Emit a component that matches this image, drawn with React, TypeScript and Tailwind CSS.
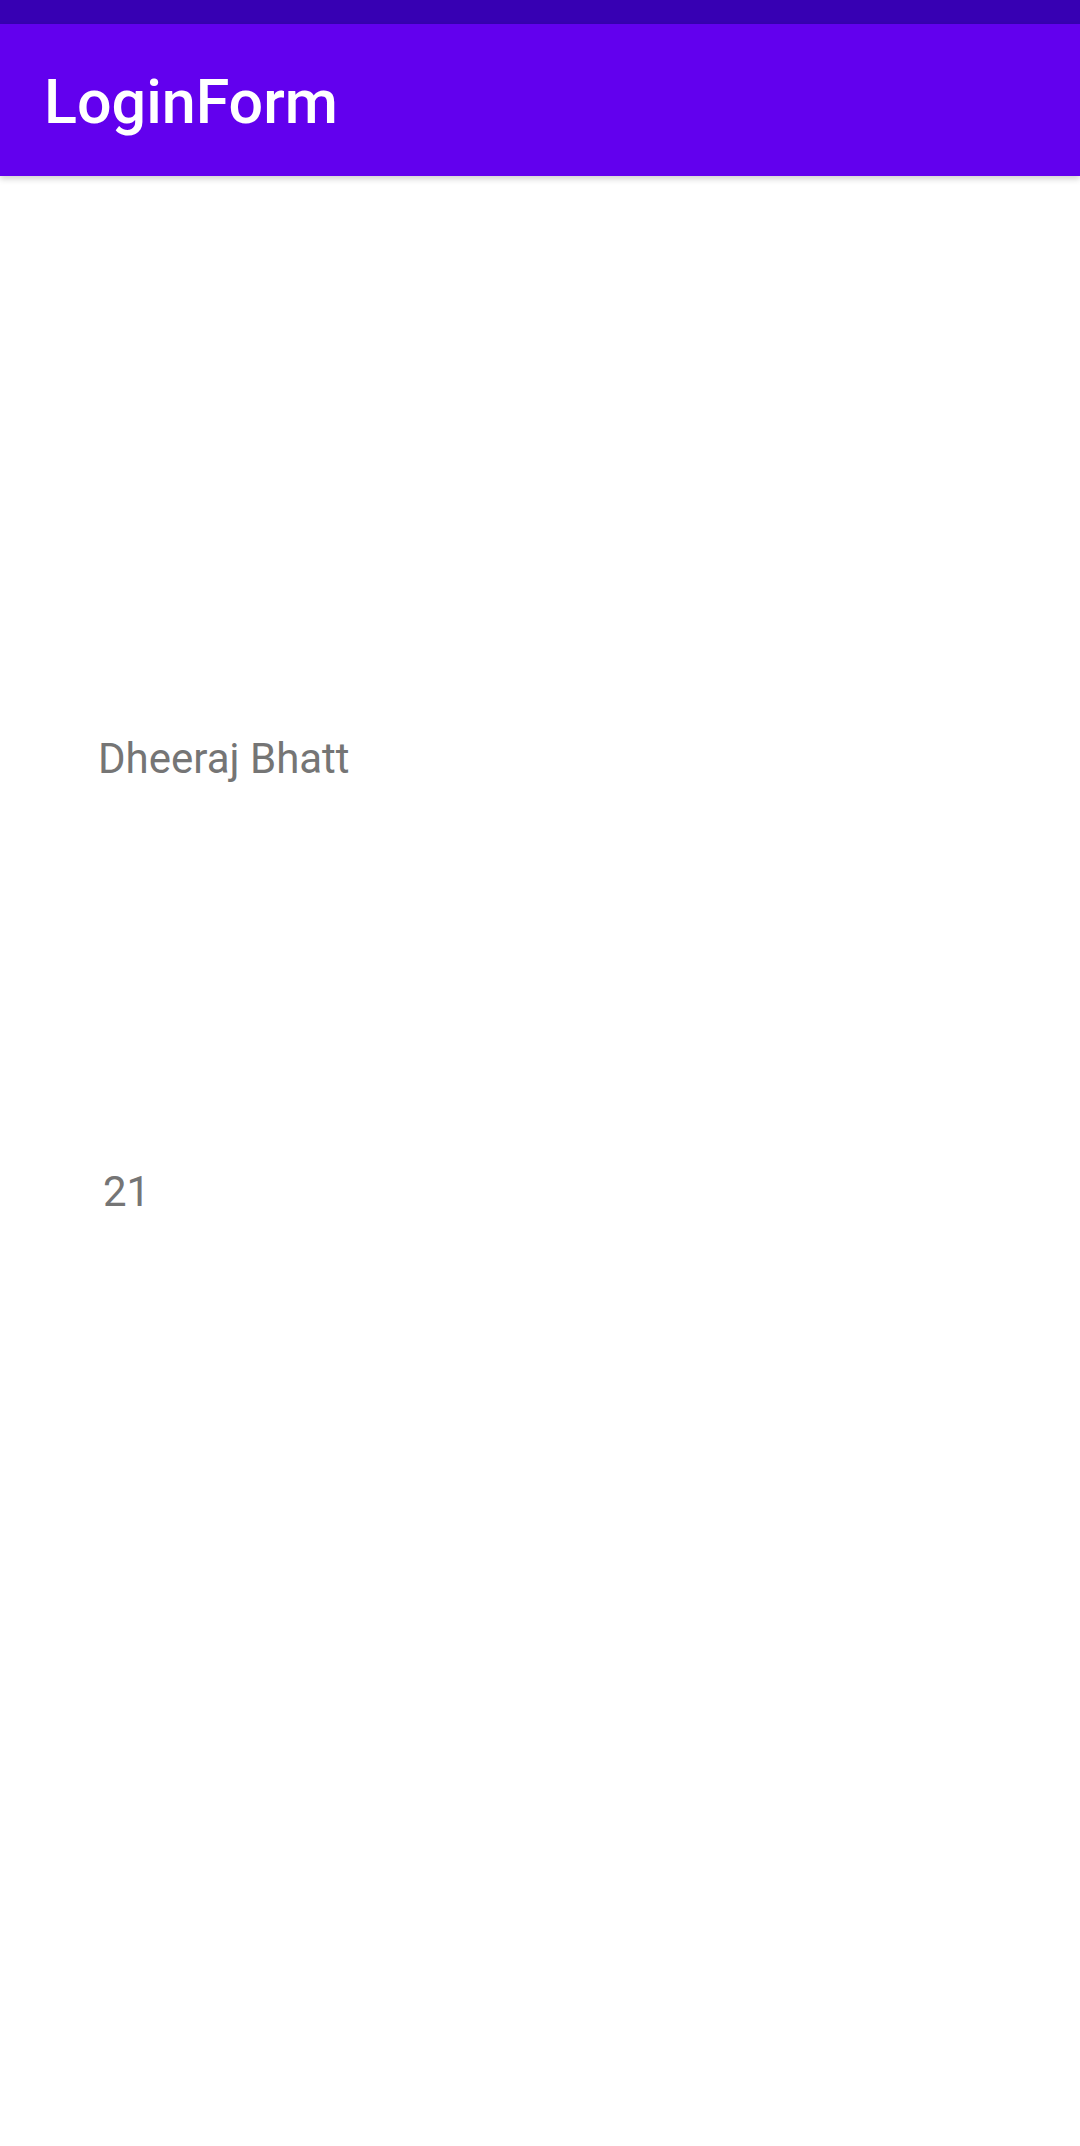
export default function App() {
  return (
    <div className="w-[1080px] h-[2146px] bg-white flex flex-col" style={{ fontFamily: "Roboto, 'Noto Sans', sans-serif" }}>
      <div className="h-[24px] bg-[#3700B3] shrink-0" />
      <div className="h-[152px] bg-[#6200EE] shrink-0 pl-[44px] pt-[43px] shadow-[0_3px_6px_rgba(0,0,0,0.18)] relative z-10">
        <div className="text-white text-[61px] leading-[70px] font-medium">LoginForm</div>
      </div>
      <div className="flex flex-col">
        <div className="mt-[558px] ml-[98px] text-[42px] leading-[49px] text-[#757575]">Dheeraj Bhatt</div>
        <div className="mt-[384px] ml-[103px] text-[42px] leading-[49px] text-[#757575]">21</div>
      </div>
    </div>
  );
}
